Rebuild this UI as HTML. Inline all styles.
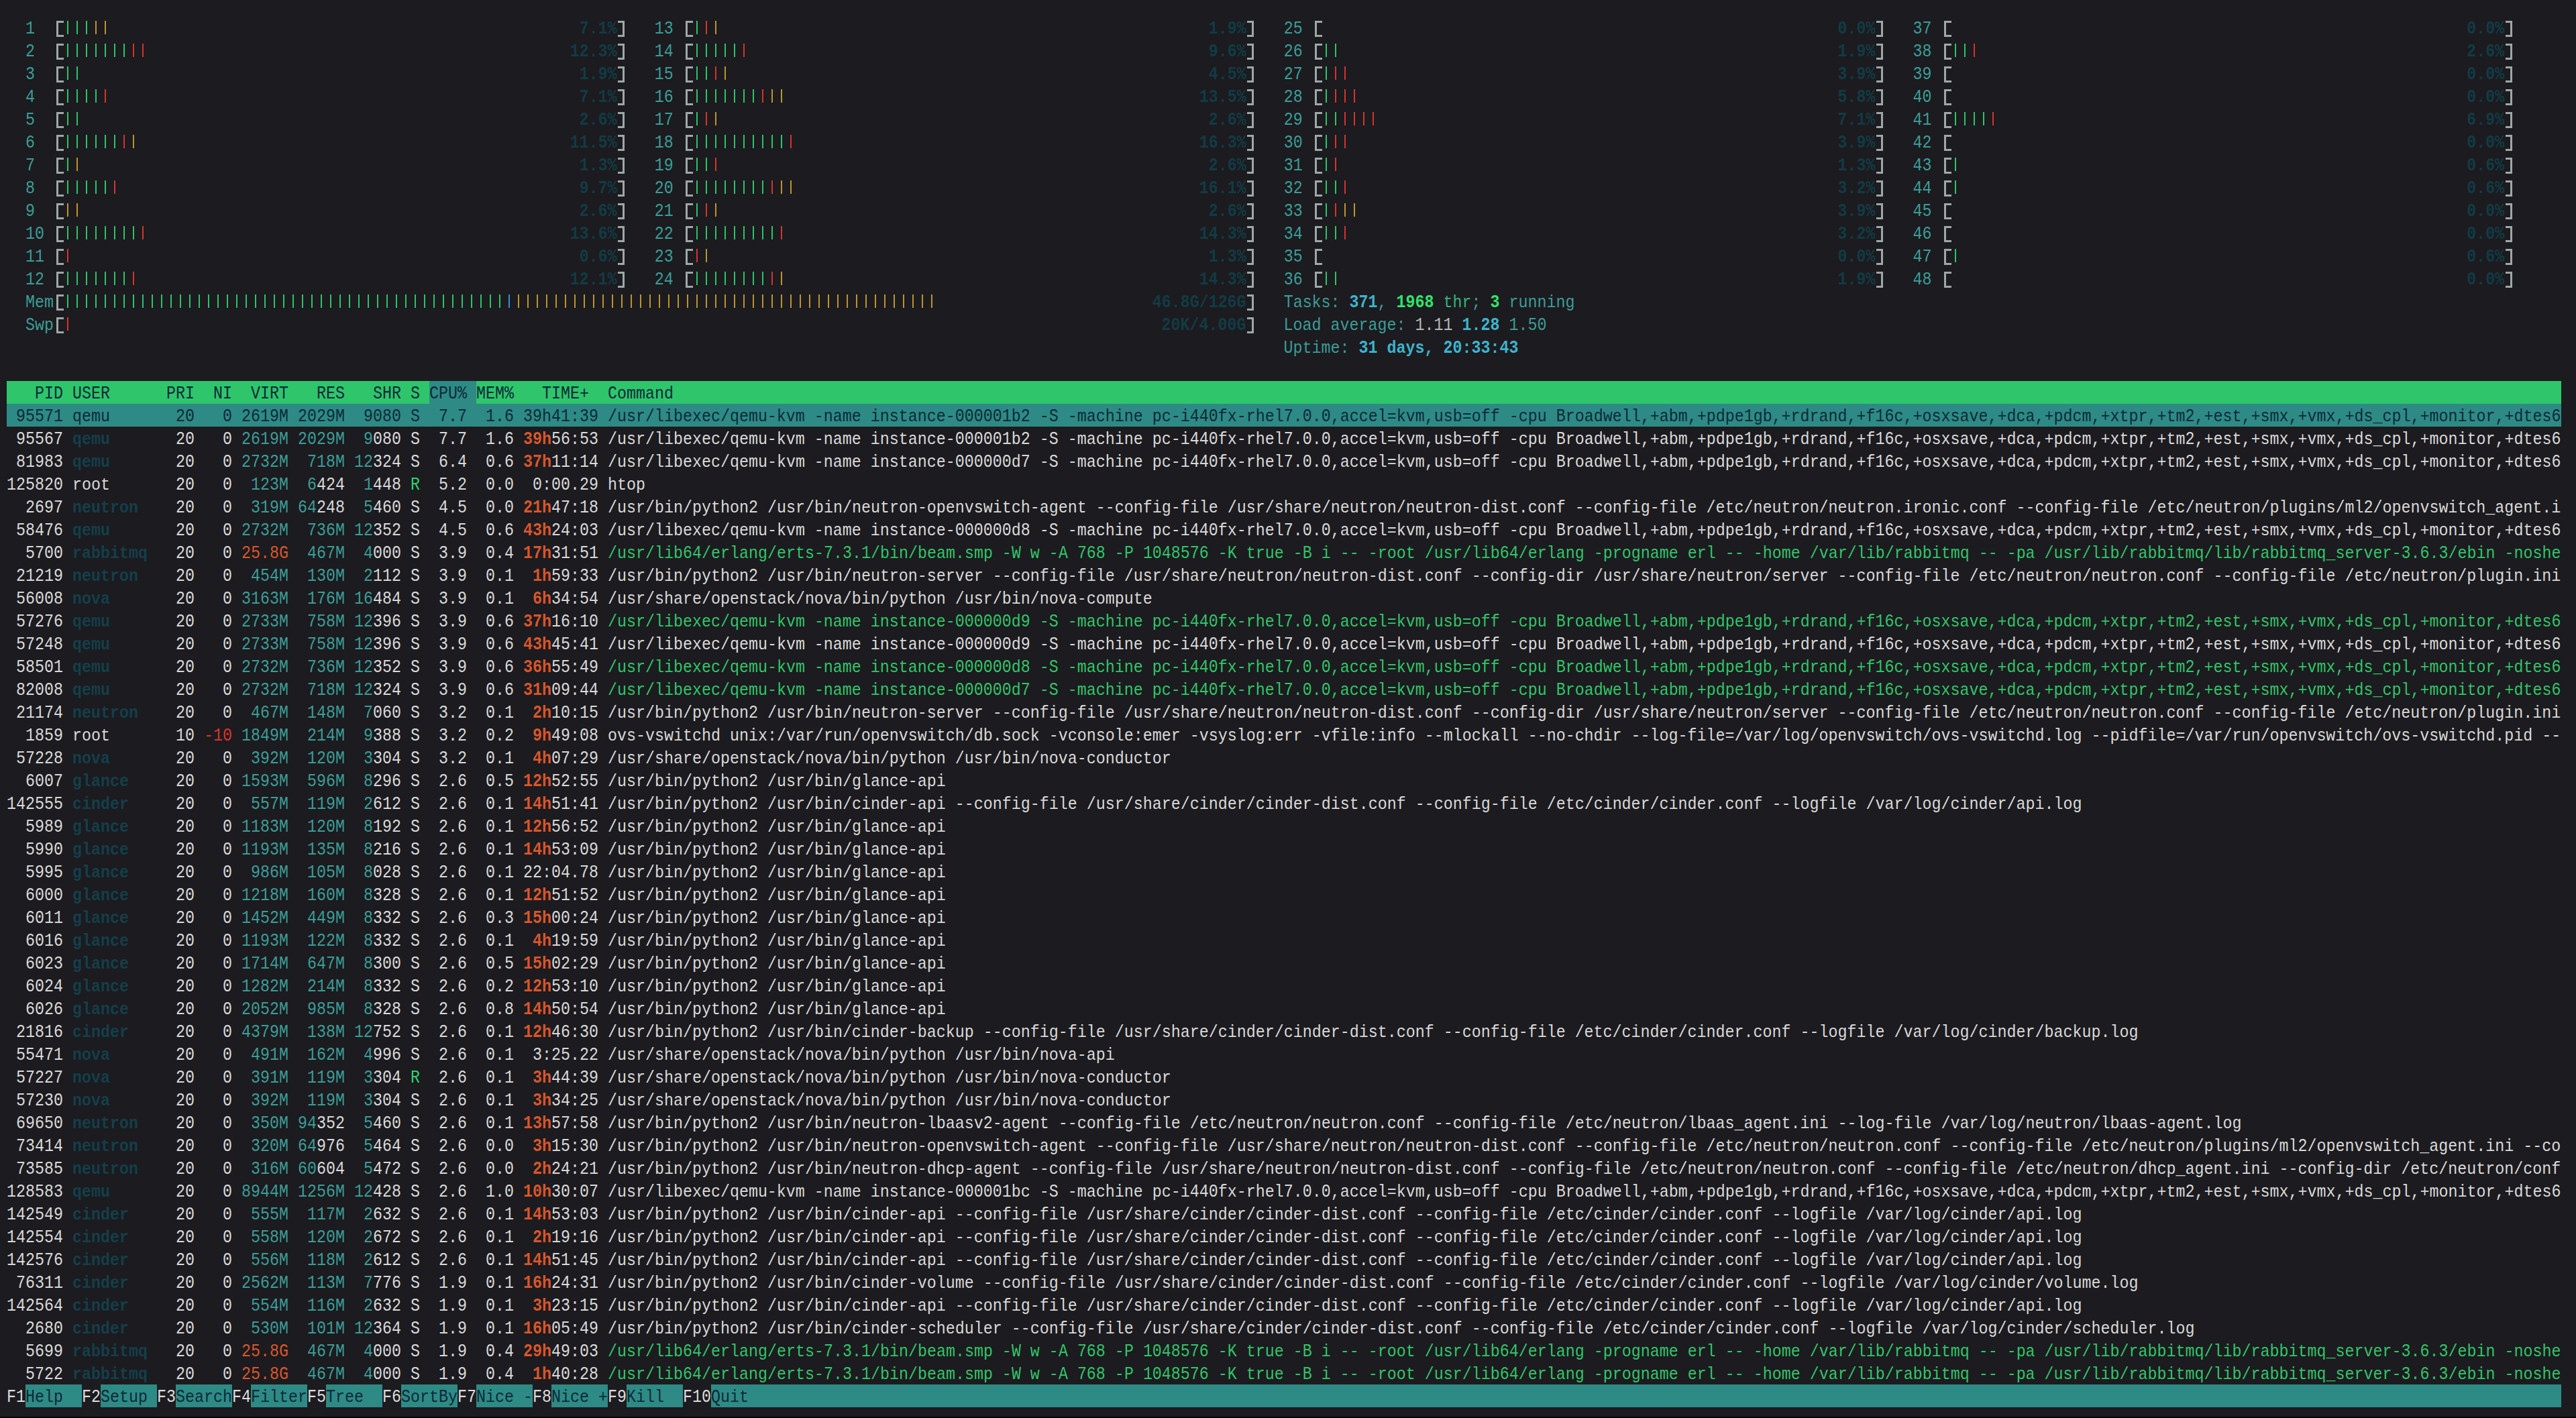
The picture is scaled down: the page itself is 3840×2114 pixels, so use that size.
<!DOCTYPE html><html><head><meta charset="utf-8"><style>
html,body{margin:0;padding:0;}body{width:3840px;height:2114px;background:#1c1b1f;position:relative;overflow:hidden;}
#bg div{position:absolute;height:34px;}
#bars i{position:absolute;width:2px;height:20px;}#brk i{position:absolute;background:#9da8a8;}
#t{position:absolute;left:10px;top:26px;transform-origin:0 0;transform:scaleX(0.875);font-family:"Liberation Mono",monospace;font-size:26.66px;line-height:34px;white-space:pre;}
#t div{height:34px;}
#t u{text-decoration:none;display:inline-block;transform:scaleY(1.06);transform-origin:0 24px;}
.w{color:#d9d9d9;}
.c{color:#3a9d97;}
.dim{color:#133f4a;font-weight:bold;}
.pct{color:#113b45;font-weight:bold;}
.br{color:#a3a9aa;}
.or{color:#d9562b;font-weight:bold;}
.orn{color:#d9562b;}
.tg{color:#31c469;}
.gr{color:#2fd16c;}
.lb{color:#3db4cd;font-weight:bold;}
.bg{color:#2fe36c;font-weight:bold;}
.gw{color:#b6baba;}
.tt{color:#33b47a;}
.hd{color:#0b2a3a;}
.sel{color:#0b2a3a;}
.red{color:#d8352e;}
.fk{color:#dcdcdc;}
</style></head><body>
<div id="bg">
<div style="left:10px;top:568px;width:630px;background:#2fc56b"></div>
<div style="left:640px;top:568px;width:70px;background:#2e8a84"></div>
<div style="left:710px;top:568px;width:3108px;background:#2fc56b"></div>
<div style="left:10px;top:602px;width:3808px;background:#2e8a84"></div>
<div style="left:38px;top:2064px;width:84px;background:#2e8a84"></div>
<div style="left:150px;top:2064px;width:84px;background:#2e8a84"></div>
<div style="left:262px;top:2064px;width:84px;background:#2e8a84"></div>
<div style="left:374px;top:2064px;width:84px;background:#2e8a84"></div>
<div style="left:486px;top:2064px;width:84px;background:#2e8a84"></div>
<div style="left:598px;top:2064px;width:84px;background:#2e8a84"></div>
<div style="left:710px;top:2064px;width:84px;background:#2e8a84"></div>
<div style="left:822px;top:2064px;width:84px;background:#2e8a84"></div>
<div style="left:934px;top:2064px;width:84px;background:#2e8a84"></div>
<div style="left:1060px;top:2064px;width:2758px;background:#2e8a84"></div>
</div><div id="bars">
<i style="left:100px;top:31px;background:#2ac466"></i>
<i style="left:114px;top:31px;background:#2ac466"></i>
<i style="left:128px;top:31px;background:#2ac466"></i>
<i style="left:142px;top:31px;background:#bb942c"></i>
<i style="left:156px;top:31px;background:#bb942c"></i>
<i style="left:100px;top:65px;background:#2ac466"></i>
<i style="left:114px;top:65px;background:#2ac466"></i>
<i style="left:128px;top:65px;background:#2ac466"></i>
<i style="left:142px;top:65px;background:#2ac466"></i>
<i style="left:156px;top:65px;background:#2ac466"></i>
<i style="left:170px;top:65px;background:#2ac466"></i>
<i style="left:184px;top:65px;background:#2ac466"></i>
<i style="left:198px;top:65px;background:#d3342d"></i>
<i style="left:212px;top:65px;background:#d3342d"></i>
<i style="left:100px;top:99px;background:#2ac466"></i>
<i style="left:114px;top:99px;background:#2ac466"></i>
<i style="left:100px;top:133px;background:#2ac466"></i>
<i style="left:114px;top:133px;background:#2ac466"></i>
<i style="left:128px;top:133px;background:#2ac466"></i>
<i style="left:142px;top:133px;background:#2ac466"></i>
<i style="left:156px;top:133px;background:#d3342d"></i>
<i style="left:100px;top:167px;background:#2ac466"></i>
<i style="left:114px;top:167px;background:#2ac466"></i>
<i style="left:100px;top:201px;background:#2ac466"></i>
<i style="left:114px;top:201px;background:#2ac466"></i>
<i style="left:128px;top:201px;background:#2ac466"></i>
<i style="left:142px;top:201px;background:#2ac466"></i>
<i style="left:156px;top:201px;background:#2ac466"></i>
<i style="left:170px;top:201px;background:#2ac466"></i>
<i style="left:184px;top:201px;background:#d3342d"></i>
<i style="left:198px;top:201px;background:#bb942c"></i>
<i style="left:100px;top:235px;background:#2ac466"></i>
<i style="left:114px;top:235px;background:#bb942c"></i>
<i style="left:100px;top:269px;background:#2ac466"></i>
<i style="left:114px;top:269px;background:#2ac466"></i>
<i style="left:128px;top:269px;background:#2ac466"></i>
<i style="left:142px;top:269px;background:#2ac466"></i>
<i style="left:156px;top:269px;background:#2ac466"></i>
<i style="left:170px;top:269px;background:#d3342d"></i>
<i style="left:100px;top:303px;background:#bb942c"></i>
<i style="left:114px;top:303px;background:#bb942c"></i>
<i style="left:100px;top:337px;background:#2ac466"></i>
<i style="left:114px;top:337px;background:#2ac466"></i>
<i style="left:128px;top:337px;background:#2ac466"></i>
<i style="left:142px;top:337px;background:#2ac466"></i>
<i style="left:156px;top:337px;background:#2ac466"></i>
<i style="left:170px;top:337px;background:#2ac466"></i>
<i style="left:184px;top:337px;background:#2ac466"></i>
<i style="left:198px;top:337px;background:#2ac466"></i>
<i style="left:212px;top:337px;background:#d3342d"></i>
<i style="left:100px;top:371px;background:#d3342d"></i>
<i style="left:100px;top:405px;background:#2ac466"></i>
<i style="left:114px;top:405px;background:#2ac466"></i>
<i style="left:128px;top:405px;background:#2ac466"></i>
<i style="left:142px;top:405px;background:#2ac466"></i>
<i style="left:156px;top:405px;background:#2ac466"></i>
<i style="left:170px;top:405px;background:#2ac466"></i>
<i style="left:184px;top:405px;background:#2ac466"></i>
<i style="left:198px;top:405px;background:#d3342d"></i>
<i style="left:1038px;top:31px;background:#2ac466"></i>
<i style="left:1052px;top:31px;background:#d3342d"></i>
<i style="left:1066px;top:31px;background:#bb942c"></i>
<i style="left:1038px;top:65px;background:#2ac466"></i>
<i style="left:1052px;top:65px;background:#2ac466"></i>
<i style="left:1066px;top:65px;background:#2ac466"></i>
<i style="left:1080px;top:65px;background:#2ac466"></i>
<i style="left:1094px;top:65px;background:#2ac466"></i>
<i style="left:1108px;top:65px;background:#d3342d"></i>
<i style="left:1038px;top:99px;background:#2ac466"></i>
<i style="left:1052px;top:99px;background:#2ac466"></i>
<i style="left:1066px;top:99px;background:#d3342d"></i>
<i style="left:1080px;top:99px;background:#bb942c"></i>
<i style="left:1038px;top:133px;background:#2ac466"></i>
<i style="left:1052px;top:133px;background:#2ac466"></i>
<i style="left:1066px;top:133px;background:#2ac466"></i>
<i style="left:1080px;top:133px;background:#2ac466"></i>
<i style="left:1094px;top:133px;background:#2ac466"></i>
<i style="left:1108px;top:133px;background:#2ac466"></i>
<i style="left:1122px;top:133px;background:#2ac466"></i>
<i style="left:1136px;top:133px;background:#d3342d"></i>
<i style="left:1150px;top:133px;background:#bb942c"></i>
<i style="left:1164px;top:133px;background:#bb942c"></i>
<i style="left:1038px;top:167px;background:#2ac466"></i>
<i style="left:1052px;top:167px;background:#d3342d"></i>
<i style="left:1066px;top:167px;background:#bb942c"></i>
<i style="left:1038px;top:201px;background:#2ac466"></i>
<i style="left:1052px;top:201px;background:#2ac466"></i>
<i style="left:1066px;top:201px;background:#2ac466"></i>
<i style="left:1080px;top:201px;background:#2ac466"></i>
<i style="left:1094px;top:201px;background:#2ac466"></i>
<i style="left:1108px;top:201px;background:#2ac466"></i>
<i style="left:1122px;top:201px;background:#2ac466"></i>
<i style="left:1136px;top:201px;background:#2ac466"></i>
<i style="left:1150px;top:201px;background:#2ac466"></i>
<i style="left:1164px;top:201px;background:#2ac466"></i>
<i style="left:1178px;top:201px;background:#d3342d"></i>
<i style="left:1038px;top:235px;background:#2ac466"></i>
<i style="left:1052px;top:235px;background:#2ac466"></i>
<i style="left:1066px;top:235px;background:#d3342d"></i>
<i style="left:1038px;top:269px;background:#2ac466"></i>
<i style="left:1052px;top:269px;background:#2ac466"></i>
<i style="left:1066px;top:269px;background:#2ac466"></i>
<i style="left:1080px;top:269px;background:#2ac466"></i>
<i style="left:1094px;top:269px;background:#2ac466"></i>
<i style="left:1108px;top:269px;background:#2ac466"></i>
<i style="left:1122px;top:269px;background:#2ac466"></i>
<i style="left:1136px;top:269px;background:#2ac466"></i>
<i style="left:1150px;top:269px;background:#d3342d"></i>
<i style="left:1164px;top:269px;background:#bb942c"></i>
<i style="left:1178px;top:269px;background:#bb942c"></i>
<i style="left:1038px;top:303px;background:#2ac466"></i>
<i style="left:1052px;top:303px;background:#d3342d"></i>
<i style="left:1066px;top:303px;background:#bb942c"></i>
<i style="left:1038px;top:337px;background:#2ac466"></i>
<i style="left:1052px;top:337px;background:#2ac466"></i>
<i style="left:1066px;top:337px;background:#2ac466"></i>
<i style="left:1080px;top:337px;background:#2ac466"></i>
<i style="left:1094px;top:337px;background:#2ac466"></i>
<i style="left:1108px;top:337px;background:#2ac466"></i>
<i style="left:1122px;top:337px;background:#2ac466"></i>
<i style="left:1136px;top:337px;background:#2ac466"></i>
<i style="left:1150px;top:337px;background:#2ac466"></i>
<i style="left:1164px;top:337px;background:#d3342d"></i>
<i style="left:1038px;top:371px;background:#d3342d"></i>
<i style="left:1052px;top:371px;background:#bb942c"></i>
<i style="left:1038px;top:405px;background:#2ac466"></i>
<i style="left:1052px;top:405px;background:#2ac466"></i>
<i style="left:1066px;top:405px;background:#2ac466"></i>
<i style="left:1080px;top:405px;background:#2ac466"></i>
<i style="left:1094px;top:405px;background:#2ac466"></i>
<i style="left:1108px;top:405px;background:#2ac466"></i>
<i style="left:1122px;top:405px;background:#2ac466"></i>
<i style="left:1136px;top:405px;background:#2ac466"></i>
<i style="left:1150px;top:405px;background:#d3342d"></i>
<i style="left:1164px;top:405px;background:#bb942c"></i>
<i style="left:1976px;top:65px;background:#2ac466"></i>
<i style="left:1990px;top:65px;background:#2ac466"></i>
<i style="left:1976px;top:99px;background:#2ac466"></i>
<i style="left:1990px;top:99px;background:#d3342d"></i>
<i style="left:2004px;top:99px;background:#d3342d"></i>
<i style="left:1976px;top:133px;background:#2ac466"></i>
<i style="left:1990px;top:133px;background:#d3342d"></i>
<i style="left:2004px;top:133px;background:#d3342d"></i>
<i style="left:2018px;top:133px;background:#d3342d"></i>
<i style="left:1976px;top:167px;background:#2ac466"></i>
<i style="left:1990px;top:167px;background:#2ac466"></i>
<i style="left:2004px;top:167px;background:#d3342d"></i>
<i style="left:2018px;top:167px;background:#d3342d"></i>
<i style="left:2032px;top:167px;background:#d3342d"></i>
<i style="left:2046px;top:167px;background:#d3342d"></i>
<i style="left:1976px;top:201px;background:#2ac466"></i>
<i style="left:1990px;top:201px;background:#d3342d"></i>
<i style="left:2004px;top:201px;background:#d3342d"></i>
<i style="left:1976px;top:235px;background:#2ac466"></i>
<i style="left:1990px;top:235px;background:#d3342d"></i>
<i style="left:1976px;top:269px;background:#2ac466"></i>
<i style="left:1990px;top:269px;background:#2ac466"></i>
<i style="left:2004px;top:269px;background:#d3342d"></i>
<i style="left:1976px;top:303px;background:#2ac466"></i>
<i style="left:1990px;top:303px;background:#d3342d"></i>
<i style="left:2004px;top:303px;background:#bb942c"></i>
<i style="left:2018px;top:303px;background:#bb942c"></i>
<i style="left:1976px;top:337px;background:#2ac466"></i>
<i style="left:1990px;top:337px;background:#2ac466"></i>
<i style="left:2004px;top:337px;background:#d3342d"></i>
<i style="left:1976px;top:405px;background:#2ac466"></i>
<i style="left:1990px;top:405px;background:#2ac466"></i>
<i style="left:2914px;top:65px;background:#2ac466"></i>
<i style="left:2928px;top:65px;background:#2ac466"></i>
<i style="left:2942px;top:65px;background:#d3342d"></i>
<i style="left:2914px;top:167px;background:#2ac466"></i>
<i style="left:2928px;top:167px;background:#2ac466"></i>
<i style="left:2942px;top:167px;background:#2ac466"></i>
<i style="left:2956px;top:167px;background:#2ac466"></i>
<i style="left:2970px;top:167px;background:#d3342d"></i>
<i style="left:2914px;top:235px;background:#2ac466"></i>
<i style="left:2914px;top:269px;background:#2ac466"></i>
<i style="left:2914px;top:371px;background:#2ac466"></i>
<i style="left:100px;top:439px;background:#2ac466"></i>
<i style="left:114px;top:439px;background:#2ac466"></i>
<i style="left:128px;top:439px;background:#2ac466"></i>
<i style="left:142px;top:439px;background:#2ac466"></i>
<i style="left:156px;top:439px;background:#2ac466"></i>
<i style="left:170px;top:439px;background:#2ac466"></i>
<i style="left:184px;top:439px;background:#2ac466"></i>
<i style="left:198px;top:439px;background:#2ac466"></i>
<i style="left:212px;top:439px;background:#2ac466"></i>
<i style="left:226px;top:439px;background:#2ac466"></i>
<i style="left:240px;top:439px;background:#2ac466"></i>
<i style="left:254px;top:439px;background:#2ac466"></i>
<i style="left:268px;top:439px;background:#2ac466"></i>
<i style="left:282px;top:439px;background:#2ac466"></i>
<i style="left:296px;top:439px;background:#2ac466"></i>
<i style="left:310px;top:439px;background:#2ac466"></i>
<i style="left:324px;top:439px;background:#2ac466"></i>
<i style="left:338px;top:439px;background:#2ac466"></i>
<i style="left:352px;top:439px;background:#2ac466"></i>
<i style="left:366px;top:439px;background:#2ac466"></i>
<i style="left:380px;top:439px;background:#2ac466"></i>
<i style="left:394px;top:439px;background:#2ac466"></i>
<i style="left:408px;top:439px;background:#2ac466"></i>
<i style="left:422px;top:439px;background:#2ac466"></i>
<i style="left:436px;top:439px;background:#2ac466"></i>
<i style="left:450px;top:439px;background:#2ac466"></i>
<i style="left:464px;top:439px;background:#2ac466"></i>
<i style="left:478px;top:439px;background:#2ac466"></i>
<i style="left:492px;top:439px;background:#2ac466"></i>
<i style="left:506px;top:439px;background:#2ac466"></i>
<i style="left:520px;top:439px;background:#2ac466"></i>
<i style="left:534px;top:439px;background:#2ac466"></i>
<i style="left:548px;top:439px;background:#2ac466"></i>
<i style="left:562px;top:439px;background:#2ac466"></i>
<i style="left:576px;top:439px;background:#2ac466"></i>
<i style="left:590px;top:439px;background:#2ac466"></i>
<i style="left:604px;top:439px;background:#2ac466"></i>
<i style="left:618px;top:439px;background:#2ac466"></i>
<i style="left:632px;top:439px;background:#2ac466"></i>
<i style="left:646px;top:439px;background:#2ac466"></i>
<i style="left:660px;top:439px;background:#2ac466"></i>
<i style="left:674px;top:439px;background:#2ac466"></i>
<i style="left:688px;top:439px;background:#2ac466"></i>
<i style="left:702px;top:439px;background:#2ac466"></i>
<i style="left:716px;top:439px;background:#2ac466"></i>
<i style="left:730px;top:439px;background:#2ac466"></i>
<i style="left:744px;top:439px;background:#2ac466"></i>
<i style="left:758px;top:439px;background:#3193d6"></i>
<i style="left:772px;top:439px;background:#bb942c"></i>
<i style="left:786px;top:439px;background:#bb942c"></i>
<i style="left:800px;top:439px;background:#bb942c"></i>
<i style="left:814px;top:439px;background:#bb942c"></i>
<i style="left:828px;top:439px;background:#bb942c"></i>
<i style="left:842px;top:439px;background:#bb942c"></i>
<i style="left:856px;top:439px;background:#bb942c"></i>
<i style="left:870px;top:439px;background:#bb942c"></i>
<i style="left:884px;top:439px;background:#bb942c"></i>
<i style="left:898px;top:439px;background:#bb942c"></i>
<i style="left:912px;top:439px;background:#bb942c"></i>
<i style="left:926px;top:439px;background:#bb942c"></i>
<i style="left:940px;top:439px;background:#bb942c"></i>
<i style="left:954px;top:439px;background:#bb942c"></i>
<i style="left:968px;top:439px;background:#bb942c"></i>
<i style="left:982px;top:439px;background:#bb942c"></i>
<i style="left:996px;top:439px;background:#bb942c"></i>
<i style="left:1010px;top:439px;background:#bb942c"></i>
<i style="left:1024px;top:439px;background:#bb942c"></i>
<i style="left:1038px;top:439px;background:#bb942c"></i>
<i style="left:1052px;top:439px;background:#bb942c"></i>
<i style="left:1066px;top:439px;background:#bb942c"></i>
<i style="left:1080px;top:439px;background:#bb942c"></i>
<i style="left:1094px;top:439px;background:#bb942c"></i>
<i style="left:1108px;top:439px;background:#bb942c"></i>
<i style="left:1122px;top:439px;background:#bb942c"></i>
<i style="left:1136px;top:439px;background:#bb942c"></i>
<i style="left:1150px;top:439px;background:#bb942c"></i>
<i style="left:1164px;top:439px;background:#bb942c"></i>
<i style="left:1178px;top:439px;background:#bb942c"></i>
<i style="left:1192px;top:439px;background:#bb942c"></i>
<i style="left:1206px;top:439px;background:#bb942c"></i>
<i style="left:1220px;top:439px;background:#bb942c"></i>
<i style="left:1234px;top:439px;background:#bb942c"></i>
<i style="left:1248px;top:439px;background:#bb942c"></i>
<i style="left:1262px;top:439px;background:#bb942c"></i>
<i style="left:1276px;top:439px;background:#bb942c"></i>
<i style="left:1290px;top:439px;background:#bb942c"></i>
<i style="left:1304px;top:439px;background:#bb942c"></i>
<i style="left:1318px;top:439px;background:#bb942c"></i>
<i style="left:1332px;top:439px;background:#bb942c"></i>
<i style="left:1346px;top:439px;background:#bb942c"></i>
<i style="left:1360px;top:439px;background:#bb942c"></i>
<i style="left:1374px;top:439px;background:#bb942c"></i>
<i style="left:1388px;top:439px;background:#bb942c"></i>
<i style="left:100px;top:473px;background:#d3342d"></i>
</div><div id="brk">
<i style="left:84px;top:31px;width:3px;height:24px"></i><i style="left:84px;top:31px;width:11px;height:3px"></i><i style="left:84px;top:52px;width:11px;height:3px"></i>
<i style="left:928px;top:31px;width:3px;height:24px"></i><i style="left:921px;top:31px;width:10px;height:3px"></i><i style="left:921px;top:52px;width:10px;height:3px"></i>
<i style="left:84px;top:65px;width:3px;height:24px"></i><i style="left:84px;top:65px;width:11px;height:3px"></i><i style="left:84px;top:86px;width:11px;height:3px"></i>
<i style="left:928px;top:65px;width:3px;height:24px"></i><i style="left:921px;top:65px;width:10px;height:3px"></i><i style="left:921px;top:86px;width:10px;height:3px"></i>
<i style="left:84px;top:99px;width:3px;height:24px"></i><i style="left:84px;top:99px;width:11px;height:3px"></i><i style="left:84px;top:120px;width:11px;height:3px"></i>
<i style="left:928px;top:99px;width:3px;height:24px"></i><i style="left:921px;top:99px;width:10px;height:3px"></i><i style="left:921px;top:120px;width:10px;height:3px"></i>
<i style="left:84px;top:133px;width:3px;height:24px"></i><i style="left:84px;top:133px;width:11px;height:3px"></i><i style="left:84px;top:154px;width:11px;height:3px"></i>
<i style="left:928px;top:133px;width:3px;height:24px"></i><i style="left:921px;top:133px;width:10px;height:3px"></i><i style="left:921px;top:154px;width:10px;height:3px"></i>
<i style="left:84px;top:167px;width:3px;height:24px"></i><i style="left:84px;top:167px;width:11px;height:3px"></i><i style="left:84px;top:188px;width:11px;height:3px"></i>
<i style="left:928px;top:167px;width:3px;height:24px"></i><i style="left:921px;top:167px;width:10px;height:3px"></i><i style="left:921px;top:188px;width:10px;height:3px"></i>
<i style="left:84px;top:201px;width:3px;height:24px"></i><i style="left:84px;top:201px;width:11px;height:3px"></i><i style="left:84px;top:222px;width:11px;height:3px"></i>
<i style="left:928px;top:201px;width:3px;height:24px"></i><i style="left:921px;top:201px;width:10px;height:3px"></i><i style="left:921px;top:222px;width:10px;height:3px"></i>
<i style="left:84px;top:235px;width:3px;height:24px"></i><i style="left:84px;top:235px;width:11px;height:3px"></i><i style="left:84px;top:256px;width:11px;height:3px"></i>
<i style="left:928px;top:235px;width:3px;height:24px"></i><i style="left:921px;top:235px;width:10px;height:3px"></i><i style="left:921px;top:256px;width:10px;height:3px"></i>
<i style="left:84px;top:269px;width:3px;height:24px"></i><i style="left:84px;top:269px;width:11px;height:3px"></i><i style="left:84px;top:290px;width:11px;height:3px"></i>
<i style="left:928px;top:269px;width:3px;height:24px"></i><i style="left:921px;top:269px;width:10px;height:3px"></i><i style="left:921px;top:290px;width:10px;height:3px"></i>
<i style="left:84px;top:303px;width:3px;height:24px"></i><i style="left:84px;top:303px;width:11px;height:3px"></i><i style="left:84px;top:324px;width:11px;height:3px"></i>
<i style="left:928px;top:303px;width:3px;height:24px"></i><i style="left:921px;top:303px;width:10px;height:3px"></i><i style="left:921px;top:324px;width:10px;height:3px"></i>
<i style="left:84px;top:337px;width:3px;height:24px"></i><i style="left:84px;top:337px;width:11px;height:3px"></i><i style="left:84px;top:358px;width:11px;height:3px"></i>
<i style="left:928px;top:337px;width:3px;height:24px"></i><i style="left:921px;top:337px;width:10px;height:3px"></i><i style="left:921px;top:358px;width:10px;height:3px"></i>
<i style="left:84px;top:371px;width:3px;height:24px"></i><i style="left:84px;top:371px;width:11px;height:3px"></i><i style="left:84px;top:392px;width:11px;height:3px"></i>
<i style="left:928px;top:371px;width:3px;height:24px"></i><i style="left:921px;top:371px;width:10px;height:3px"></i><i style="left:921px;top:392px;width:10px;height:3px"></i>
<i style="left:84px;top:405px;width:3px;height:24px"></i><i style="left:84px;top:405px;width:11px;height:3px"></i><i style="left:84px;top:426px;width:11px;height:3px"></i>
<i style="left:928px;top:405px;width:3px;height:24px"></i><i style="left:921px;top:405px;width:10px;height:3px"></i><i style="left:921px;top:426px;width:10px;height:3px"></i>
<i style="left:1022px;top:31px;width:3px;height:24px"></i><i style="left:1022px;top:31px;width:11px;height:3px"></i><i style="left:1022px;top:52px;width:11px;height:3px"></i>
<i style="left:1866px;top:31px;width:3px;height:24px"></i><i style="left:1859px;top:31px;width:10px;height:3px"></i><i style="left:1859px;top:52px;width:10px;height:3px"></i>
<i style="left:1022px;top:65px;width:3px;height:24px"></i><i style="left:1022px;top:65px;width:11px;height:3px"></i><i style="left:1022px;top:86px;width:11px;height:3px"></i>
<i style="left:1866px;top:65px;width:3px;height:24px"></i><i style="left:1859px;top:65px;width:10px;height:3px"></i><i style="left:1859px;top:86px;width:10px;height:3px"></i>
<i style="left:1022px;top:99px;width:3px;height:24px"></i><i style="left:1022px;top:99px;width:11px;height:3px"></i><i style="left:1022px;top:120px;width:11px;height:3px"></i>
<i style="left:1866px;top:99px;width:3px;height:24px"></i><i style="left:1859px;top:99px;width:10px;height:3px"></i><i style="left:1859px;top:120px;width:10px;height:3px"></i>
<i style="left:1022px;top:133px;width:3px;height:24px"></i><i style="left:1022px;top:133px;width:11px;height:3px"></i><i style="left:1022px;top:154px;width:11px;height:3px"></i>
<i style="left:1866px;top:133px;width:3px;height:24px"></i><i style="left:1859px;top:133px;width:10px;height:3px"></i><i style="left:1859px;top:154px;width:10px;height:3px"></i>
<i style="left:1022px;top:167px;width:3px;height:24px"></i><i style="left:1022px;top:167px;width:11px;height:3px"></i><i style="left:1022px;top:188px;width:11px;height:3px"></i>
<i style="left:1866px;top:167px;width:3px;height:24px"></i><i style="left:1859px;top:167px;width:10px;height:3px"></i><i style="left:1859px;top:188px;width:10px;height:3px"></i>
<i style="left:1022px;top:201px;width:3px;height:24px"></i><i style="left:1022px;top:201px;width:11px;height:3px"></i><i style="left:1022px;top:222px;width:11px;height:3px"></i>
<i style="left:1866px;top:201px;width:3px;height:24px"></i><i style="left:1859px;top:201px;width:10px;height:3px"></i><i style="left:1859px;top:222px;width:10px;height:3px"></i>
<i style="left:1022px;top:235px;width:3px;height:24px"></i><i style="left:1022px;top:235px;width:11px;height:3px"></i><i style="left:1022px;top:256px;width:11px;height:3px"></i>
<i style="left:1866px;top:235px;width:3px;height:24px"></i><i style="left:1859px;top:235px;width:10px;height:3px"></i><i style="left:1859px;top:256px;width:10px;height:3px"></i>
<i style="left:1022px;top:269px;width:3px;height:24px"></i><i style="left:1022px;top:269px;width:11px;height:3px"></i><i style="left:1022px;top:290px;width:11px;height:3px"></i>
<i style="left:1866px;top:269px;width:3px;height:24px"></i><i style="left:1859px;top:269px;width:10px;height:3px"></i><i style="left:1859px;top:290px;width:10px;height:3px"></i>
<i style="left:1022px;top:303px;width:3px;height:24px"></i><i style="left:1022px;top:303px;width:11px;height:3px"></i><i style="left:1022px;top:324px;width:11px;height:3px"></i>
<i style="left:1866px;top:303px;width:3px;height:24px"></i><i style="left:1859px;top:303px;width:10px;height:3px"></i><i style="left:1859px;top:324px;width:10px;height:3px"></i>
<i style="left:1022px;top:337px;width:3px;height:24px"></i><i style="left:1022px;top:337px;width:11px;height:3px"></i><i style="left:1022px;top:358px;width:11px;height:3px"></i>
<i style="left:1866px;top:337px;width:3px;height:24px"></i><i style="left:1859px;top:337px;width:10px;height:3px"></i><i style="left:1859px;top:358px;width:10px;height:3px"></i>
<i style="left:1022px;top:371px;width:3px;height:24px"></i><i style="left:1022px;top:371px;width:11px;height:3px"></i><i style="left:1022px;top:392px;width:11px;height:3px"></i>
<i style="left:1866px;top:371px;width:3px;height:24px"></i><i style="left:1859px;top:371px;width:10px;height:3px"></i><i style="left:1859px;top:392px;width:10px;height:3px"></i>
<i style="left:1022px;top:405px;width:3px;height:24px"></i><i style="left:1022px;top:405px;width:11px;height:3px"></i><i style="left:1022px;top:426px;width:11px;height:3px"></i>
<i style="left:1866px;top:405px;width:3px;height:24px"></i><i style="left:1859px;top:405px;width:10px;height:3px"></i><i style="left:1859px;top:426px;width:10px;height:3px"></i>
<i style="left:1960px;top:31px;width:3px;height:24px"></i><i style="left:1960px;top:31px;width:11px;height:3px"></i><i style="left:1960px;top:52px;width:11px;height:3px"></i>
<i style="left:2804px;top:31px;width:3px;height:24px"></i><i style="left:2797px;top:31px;width:10px;height:3px"></i><i style="left:2797px;top:52px;width:10px;height:3px"></i>
<i style="left:1960px;top:65px;width:3px;height:24px"></i><i style="left:1960px;top:65px;width:11px;height:3px"></i><i style="left:1960px;top:86px;width:11px;height:3px"></i>
<i style="left:2804px;top:65px;width:3px;height:24px"></i><i style="left:2797px;top:65px;width:10px;height:3px"></i><i style="left:2797px;top:86px;width:10px;height:3px"></i>
<i style="left:1960px;top:99px;width:3px;height:24px"></i><i style="left:1960px;top:99px;width:11px;height:3px"></i><i style="left:1960px;top:120px;width:11px;height:3px"></i>
<i style="left:2804px;top:99px;width:3px;height:24px"></i><i style="left:2797px;top:99px;width:10px;height:3px"></i><i style="left:2797px;top:120px;width:10px;height:3px"></i>
<i style="left:1960px;top:133px;width:3px;height:24px"></i><i style="left:1960px;top:133px;width:11px;height:3px"></i><i style="left:1960px;top:154px;width:11px;height:3px"></i>
<i style="left:2804px;top:133px;width:3px;height:24px"></i><i style="left:2797px;top:133px;width:10px;height:3px"></i><i style="left:2797px;top:154px;width:10px;height:3px"></i>
<i style="left:1960px;top:167px;width:3px;height:24px"></i><i style="left:1960px;top:167px;width:11px;height:3px"></i><i style="left:1960px;top:188px;width:11px;height:3px"></i>
<i style="left:2804px;top:167px;width:3px;height:24px"></i><i style="left:2797px;top:167px;width:10px;height:3px"></i><i style="left:2797px;top:188px;width:10px;height:3px"></i>
<i style="left:1960px;top:201px;width:3px;height:24px"></i><i style="left:1960px;top:201px;width:11px;height:3px"></i><i style="left:1960px;top:222px;width:11px;height:3px"></i>
<i style="left:2804px;top:201px;width:3px;height:24px"></i><i style="left:2797px;top:201px;width:10px;height:3px"></i><i style="left:2797px;top:222px;width:10px;height:3px"></i>
<i style="left:1960px;top:235px;width:3px;height:24px"></i><i style="left:1960px;top:235px;width:11px;height:3px"></i><i style="left:1960px;top:256px;width:11px;height:3px"></i>
<i style="left:2804px;top:235px;width:3px;height:24px"></i><i style="left:2797px;top:235px;width:10px;height:3px"></i><i style="left:2797px;top:256px;width:10px;height:3px"></i>
<i style="left:1960px;top:269px;width:3px;height:24px"></i><i style="left:1960px;top:269px;width:11px;height:3px"></i><i style="left:1960px;top:290px;width:11px;height:3px"></i>
<i style="left:2804px;top:269px;width:3px;height:24px"></i><i style="left:2797px;top:269px;width:10px;height:3px"></i><i style="left:2797px;top:290px;width:10px;height:3px"></i>
<i style="left:1960px;top:303px;width:3px;height:24px"></i><i style="left:1960px;top:303px;width:11px;height:3px"></i><i style="left:1960px;top:324px;width:11px;height:3px"></i>
<i style="left:2804px;top:303px;width:3px;height:24px"></i><i style="left:2797px;top:303px;width:10px;height:3px"></i><i style="left:2797px;top:324px;width:10px;height:3px"></i>
<i style="left:1960px;top:337px;width:3px;height:24px"></i><i style="left:1960px;top:337px;width:11px;height:3px"></i><i style="left:1960px;top:358px;width:11px;height:3px"></i>
<i style="left:2804px;top:337px;width:3px;height:24px"></i><i style="left:2797px;top:337px;width:10px;height:3px"></i><i style="left:2797px;top:358px;width:10px;height:3px"></i>
<i style="left:1960px;top:371px;width:3px;height:24px"></i><i style="left:1960px;top:371px;width:11px;height:3px"></i><i style="left:1960px;top:392px;width:11px;height:3px"></i>
<i style="left:2804px;top:371px;width:3px;height:24px"></i><i style="left:2797px;top:371px;width:10px;height:3px"></i><i style="left:2797px;top:392px;width:10px;height:3px"></i>
<i style="left:1960px;top:405px;width:3px;height:24px"></i><i style="left:1960px;top:405px;width:11px;height:3px"></i><i style="left:1960px;top:426px;width:11px;height:3px"></i>
<i style="left:2804px;top:405px;width:3px;height:24px"></i><i style="left:2797px;top:405px;width:10px;height:3px"></i><i style="left:2797px;top:426px;width:10px;height:3px"></i>
<i style="left:2898px;top:31px;width:3px;height:24px"></i><i style="left:2898px;top:31px;width:11px;height:3px"></i><i style="left:2898px;top:52px;width:11px;height:3px"></i>
<i style="left:3742px;top:31px;width:3px;height:24px"></i><i style="left:3735px;top:31px;width:10px;height:3px"></i><i style="left:3735px;top:52px;width:10px;height:3px"></i>
<i style="left:2898px;top:65px;width:3px;height:24px"></i><i style="left:2898px;top:65px;width:11px;height:3px"></i><i style="left:2898px;top:86px;width:11px;height:3px"></i>
<i style="left:3742px;top:65px;width:3px;height:24px"></i><i style="left:3735px;top:65px;width:10px;height:3px"></i><i style="left:3735px;top:86px;width:10px;height:3px"></i>
<i style="left:2898px;top:99px;width:3px;height:24px"></i><i style="left:2898px;top:99px;width:11px;height:3px"></i><i style="left:2898px;top:120px;width:11px;height:3px"></i>
<i style="left:3742px;top:99px;width:3px;height:24px"></i><i style="left:3735px;top:99px;width:10px;height:3px"></i><i style="left:3735px;top:120px;width:10px;height:3px"></i>
<i style="left:2898px;top:133px;width:3px;height:24px"></i><i style="left:2898px;top:133px;width:11px;height:3px"></i><i style="left:2898px;top:154px;width:11px;height:3px"></i>
<i style="left:3742px;top:133px;width:3px;height:24px"></i><i style="left:3735px;top:133px;width:10px;height:3px"></i><i style="left:3735px;top:154px;width:10px;height:3px"></i>
<i style="left:2898px;top:167px;width:3px;height:24px"></i><i style="left:2898px;top:167px;width:11px;height:3px"></i><i style="left:2898px;top:188px;width:11px;height:3px"></i>
<i style="left:3742px;top:167px;width:3px;height:24px"></i><i style="left:3735px;top:167px;width:10px;height:3px"></i><i style="left:3735px;top:188px;width:10px;height:3px"></i>
<i style="left:2898px;top:201px;width:3px;height:24px"></i><i style="left:2898px;top:201px;width:11px;height:3px"></i><i style="left:2898px;top:222px;width:11px;height:3px"></i>
<i style="left:3742px;top:201px;width:3px;height:24px"></i><i style="left:3735px;top:201px;width:10px;height:3px"></i><i style="left:3735px;top:222px;width:10px;height:3px"></i>
<i style="left:2898px;top:235px;width:3px;height:24px"></i><i style="left:2898px;top:235px;width:11px;height:3px"></i><i style="left:2898px;top:256px;width:11px;height:3px"></i>
<i style="left:3742px;top:235px;width:3px;height:24px"></i><i style="left:3735px;top:235px;width:10px;height:3px"></i><i style="left:3735px;top:256px;width:10px;height:3px"></i>
<i style="left:2898px;top:269px;width:3px;height:24px"></i><i style="left:2898px;top:269px;width:11px;height:3px"></i><i style="left:2898px;top:290px;width:11px;height:3px"></i>
<i style="left:3742px;top:269px;width:3px;height:24px"></i><i style="left:3735px;top:269px;width:10px;height:3px"></i><i style="left:3735px;top:290px;width:10px;height:3px"></i>
<i style="left:2898px;top:303px;width:3px;height:24px"></i><i style="left:2898px;top:303px;width:11px;height:3px"></i><i style="left:2898px;top:324px;width:11px;height:3px"></i>
<i style="left:3742px;top:303px;width:3px;height:24px"></i><i style="left:3735px;top:303px;width:10px;height:3px"></i><i style="left:3735px;top:324px;width:10px;height:3px"></i>
<i style="left:2898px;top:337px;width:3px;height:24px"></i><i style="left:2898px;top:337px;width:11px;height:3px"></i><i style="left:2898px;top:358px;width:11px;height:3px"></i>
<i style="left:3742px;top:337px;width:3px;height:24px"></i><i style="left:3735px;top:337px;width:10px;height:3px"></i><i style="left:3735px;top:358px;width:10px;height:3px"></i>
<i style="left:2898px;top:371px;width:3px;height:24px"></i><i style="left:2898px;top:371px;width:11px;height:3px"></i><i style="left:2898px;top:392px;width:11px;height:3px"></i>
<i style="left:3742px;top:371px;width:3px;height:24px"></i><i style="left:3735px;top:371px;width:10px;height:3px"></i><i style="left:3735px;top:392px;width:10px;height:3px"></i>
<i style="left:2898px;top:405px;width:3px;height:24px"></i><i style="left:2898px;top:405px;width:11px;height:3px"></i><i style="left:2898px;top:426px;width:11px;height:3px"></i>
<i style="left:3742px;top:405px;width:3px;height:24px"></i><i style="left:3735px;top:405px;width:10px;height:3px"></i><i style="left:3735px;top:426px;width:10px;height:3px"></i>
<i style="left:84px;top:439px;width:3px;height:24px"></i><i style="left:84px;top:439px;width:11px;height:3px"></i><i style="left:84px;top:460px;width:11px;height:3px"></i>
<i style="left:1866px;top:439px;width:3px;height:24px"></i><i style="left:1859px;top:439px;width:10px;height:3px"></i><i style="left:1859px;top:460px;width:10px;height:3px"></i>
<i style="left:84px;top:473px;width:3px;height:24px"></i><i style="left:84px;top:473px;width:11px;height:3px"></i><i style="left:84px;top:494px;width:11px;height:3px"></i>
<i style="left:1866px;top:473px;width:3px;height:24px"></i><i style="left:1859px;top:473px;width:10px;height:3px"></i><i style="left:1859px;top:494px;width:10px;height:3px"></i>
</div><div id="t"><div><span class="w">  </span><span class="c"><u>1</u>                                                          </span><span class="pct"><u>7</u>.<u>1%</u>    </span><span class="c"><u>13</u>                                                         </span><span class="pct"><u>1</u>.<u>9%</u>    </span><span class="c"><u>25</u>                                                         </span><span class="pct"><u>0</u>.<u>0%</u>    </span><span class="c"><u>37</u>                                                         </span><span class="pct"><u>0</u>.<u>0%</u></span></div><div><span class="w">  </span><span class="c"><u>2</u>                                                         </span><span class="pct"><u>12</u>.<u>3%</u>    </span><span class="c"><u>14</u>                                                         </span><span class="pct"><u>9</u>.<u>6%</u>    </span><span class="c"><u>26</u>                                                         </span><span class="pct"><u>1</u>.<u>9%</u>    </span><span class="c"><u>38</u>                                                         </span><span class="pct"><u>2</u>.<u>6%</u></span></div><div><span class="w">  </span><span class="c"><u>3</u>                                                          </span><span class="pct"><u>1</u>.<u>9%</u>    </span><span class="c"><u>15</u>                                                         </span><span class="pct"><u>4</u>.<u>5%</u>    </span><span class="c"><u>27</u>                                                         </span><span class="pct"><u>3</u>.<u>9%</u>    </span><span class="c"><u>39</u>                                                         </span><span class="pct"><u>0</u>.<u>0%</u></span></div><div><span class="w">  </span><span class="c"><u>4</u>                                                          </span><span class="pct"><u>7</u>.<u>1%</u>    </span><span class="c"><u>16</u>                                                        </span><span class="pct"><u>13</u>.<u>5%</u>    </span><span class="c"><u>28</u>                                                         </span><span class="pct"><u>5</u>.<u>8%</u>    </span><span class="c"><u>40</u>                                                         </span><span class="pct"><u>0</u>.<u>0%</u></span></div><div><span class="w">  </span><span class="c"><u>5</u>                                                          </span><span class="pct"><u>2</u>.<u>6%</u>    </span><span class="c"><u>17</u>                                                         </span><span class="pct"><u>2</u>.<u>6%</u>    </span><span class="c"><u>29</u>                                                         </span><span class="pct"><u>7</u>.<u>1%</u>    </span><span class="c"><u>41</u>                                                         </span><span class="pct"><u>6</u>.<u>9%</u></span></div><div><span class="w">  </span><span class="c"><u>6</u>                                                         </span><span class="pct"><u>11</u>.<u>5%</u>    </span><span class="c"><u>18</u>                                                        </span><span class="pct"><u>16</u>.<u>3%</u>    </span><span class="c"><u>30</u>                                                         </span><span class="pct"><u>3</u>.<u>9%</u>    </span><span class="c"><u>42</u>                                                         </span><span class="pct"><u>0</u>.<u>0%</u></span></div><div><span class="w">  </span><span class="c"><u>7</u>                                                          </span><span class="pct"><u>1</u>.<u>3%</u>    </span><span class="c"><u>19</u>                                                         </span><span class="pct"><u>2</u>.<u>6%</u>    </span><span class="c"><u>31</u>                                                         </span><span class="pct"><u>1</u>.<u>3%</u>    </span><span class="c"><u>43</u>                                                         </span><span class="pct"><u>0</u>.<u>6%</u></span></div><div><span class="w">  </span><span class="c"><u>8</u>                                                          </span><span class="pct"><u>9</u>.<u>7%</u>    </span><span class="c"><u>20</u>                                                        </span><span class="pct"><u>16</u>.<u>1%</u>    </span><span class="c"><u>32</u>                                                         </span><span class="pct"><u>3</u>.<u>2%</u>    </span><span class="c"><u>44</u>                                                         </span><span class="pct"><u>0</u>.<u>6%</u></span></div><div><span class="w">  </span><span class="c"><u>9</u>                                                          </span><span class="pct"><u>2</u>.<u>6%</u>    </span><span class="c"><u>21</u>                                                         </span><span class="pct"><u>2</u>.<u>6%</u>    </span><span class="c"><u>33</u>                                                         </span><span class="pct"><u>3</u>.<u>9%</u>    </span><span class="c"><u>45</u>                                                         </span><span class="pct"><u>0</u>.<u>0%</u></span></div><div><span class="w">  </span><span class="c"><u>10</u>                                                        </span><span class="pct"><u>13</u>.<u>6%</u>    </span><span class="c"><u>22</u>                                                        </span><span class="pct"><u>14</u>.<u>3%</u>    </span><span class="c"><u>34</u>                                                         </span><span class="pct"><u>3</u>.<u>2%</u>    </span><span class="c"><u>46</u>                                                         </span><span class="pct"><u>0</u>.<u>0%</u></span></div><div><span class="w">  </span><span class="c"><u>11</u>                                                         </span><span class="pct"><u>0</u>.<u>6%</u>    </span><span class="c"><u>23</u>                                                         </span><span class="pct"><u>1</u>.<u>3%</u>    </span><span class="c"><u>35</u>                                                         </span><span class="pct"><u>0</u>.<u>0%</u>    </span><span class="c"><u>47</u>                                                         </span><span class="pct"><u>0</u>.<u>6%</u></span></div><div><span class="w">  </span><span class="c"><u>12</u>                                                        </span><span class="pct"><u>12</u>.<u>1%</u>    </span><span class="c"><u>24</u>                                                        </span><span class="pct"><u>14</u>.<u>3%</u>    </span><span class="c"><u>36</u>                                                         </span><span class="pct"><u>1</u>.<u>9%</u>    </span><span class="c"><u>48</u>                                                         </span><span class="pct"><u>0</u>.<u>0%</u></span></div><div><span class="w">  </span><span class="c"><u>M</u>em                                                                                                                     </span><span class="pct"><u>46</u>.<u>8G</u>/<u>126G</u>    </span><span class="c"><u>T</u>asks: </span><span class="lb"><u>371</u></span><span class="c">, </span><span class="bg"><u>1968</u> </span><span class="tt">thr</span><span class="c">; </span><span class="bg"><u>3</u> </span><span class="c">running</span></div><div><span class="w">  </span><span class="c"><u>S</u>wp                                                                                                                      </span><span class="pct"><u>20K</u>/<u>4</u>.<u>00G</u>    </span><span class="c"><u>L</u>oad average: </span><span class="gw"><u>1</u>.<u>11</u> </span><span class="lb"><u>1</u>.<u>28</u> </span><span class="c"><u>1</u>.<u>50</u></span></div><div><span class="w">                                                                                                                                        </span><span class="c"><u>U</u>ptime: </span><span class="lb"><u>31</u> days, <u>20</u>:<u>33</u>:<u>43</u></span></div><div></div><div><span class="hd">   <u>PID</u> <u>USER</u>      <u>PRI</u>  <u>NI</u>  <u>VIRT</u>   <u>RES</u>   <u>SHR</u> <u>S</u> <u>CPU%</u> <u>MEM%</u>   <u>TIME</u>+  <u>C</u>ommand</span></div><div><span class="sel"> <u>95571</u> qemu       <u>20</u>   <u>0</u> <u>2619M</u> <u>2029M</u>  <u>9080</u> <u>S</u>  <u>7</u>.<u>7</u>  <u>1</u>.<u>6</u> <u>39</u>h<u>41</u>:<u>39</u> /usr/libexec/qemu-kvm -name instance-<u>000001</u>b<u>2</u> -<u>S</u> -machine pc-i<u>440</u>fx-rhel<u>7</u>.<u>0</u>.<u>0</u>,accel=kvm,usb=off -cpu <u>B</u>roadwell,+abm,+pdpe<u>1</u>gb,+rdrand,+f<u>16</u>c,+osxsave,+dca,+pdcm,+xtpr,+tm<u>2</u>,+est,+smx,+vmx,+ds_cpl,+monitor,+dtes<u>6</u></span></div><div><span class="w"> <u>95567</u> </span><span class="dim">qemu       </span><span class="w"><u>20</u>   <u>0</u> </span><span class="c"><u>2619M</u> <u>2029M</u>  <u>9</u></span><span class="w"><u>080</u> <u>S</u>  <u>7</u>.<u>7</u>  <u>1</u>.<u>6</u> </span><span class="or"><u>39</u>h</span><span class="w"><u>56</u>:<u>53</u> /usr/libexec/qemu-kvm -name instance-<u>000001</u>b<u>2</u> -<u>S</u> -machine pc-i<u>440</u>fx-rhel<u>7</u>.<u>0</u>.<u>0</u>,accel=kvm,usb=off -cpu <u>B</u>roadwell,+abm,+pdpe<u>1</u>gb,+rdrand,+f<u>16</u>c,+osxsave,+dca,+pdcm,+xtpr,+tm<u>2</u>,+est,+smx,+vmx,+ds_cpl,+monitor,+dtes<u>6</u></span></div><div><span class="w"> <u>81983</u> </span><span class="dim">qemu       </span><span class="w"><u>20</u>   <u>0</u> </span><span class="c"><u>2732M</u>  <u>718M</u> <u>12</u></span><span class="w"><u>324</u> <u>S</u>  <u>6</u>.<u>4</u>  <u>0</u>.<u>6</u> </span><span class="or"><u>37</u>h</span><span class="w"><u>11</u>:<u>14</u> /usr/libexec/qemu-kvm -name instance-<u>000000</u>d<u>7</u> -<u>S</u> -machine pc-i<u>440</u>fx-rhel<u>7</u>.<u>0</u>.<u>0</u>,accel=kvm,usb=off -cpu <u>B</u>roadwell,+abm,+pdpe<u>1</u>gb,+rdrand,+f<u>16</u>c,+osxsave,+dca,+pdcm,+xtpr,+tm<u>2</u>,+est,+smx,+vmx,+ds_cpl,+monitor,+dtes<u>6</u></span></div><div><span class="w"><u>125820</u> root       <u>20</u>   <u>0</u>  </span><span class="c"><u>123M</u>  <u>6</u></span><span class="w"><u>424</u>  </span><span class="c"><u>1</u></span><span class="w"><u>448</u> </span><span class="gr"><u>R</u>  </span><span class="w"><u>5</u>.<u>2</u>  <u>0</u>.<u>0</u>  <u>0</u>:<u>00</u>.<u>29</u> htop</span></div><div><span class="w">  <u>2697</u> </span><span class="dim">neutron    </span><span class="w"><u>20</u>   <u>0</u>  </span><span class="c"><u>319M</u> <u>64</u></span><span class="w"><u>248</u>  </span><span class="c"><u>5</u></span><span class="w"><u>460</u> <u>S</u>  <u>4</u>.<u>5</u>  <u>0</u>.<u>0</u> </span><span class="or"><u>21</u>h</span><span class="w"><u>47</u>:<u>18</u> /usr/bin/python<u>2</u> /usr/bin/neutron-openvswitch-agent --config-file /usr/share/neutron/neutron-dist.conf --config-file /etc/neutron/neutron.ironic.conf --config-file /etc/neutron/plugins/ml<u>2</u>/openvswitch_agent.i</span></div><div><span class="w"> <u>58476</u> </span><span class="dim">qemu       </span><span class="w"><u>20</u>   <u>0</u> </span><span class="c"><u>2732M</u>  <u>736M</u> <u>12</u></span><span class="w"><u>352</u> <u>S</u>  <u>4</u>.<u>5</u>  <u>0</u>.<u>6</u> </span><span class="or"><u>43</u>h</span><span class="w"><u>24</u>:<u>03</u> /usr/libexec/qemu-kvm -name instance-<u>000000</u>d<u>8</u> -<u>S</u> -machine pc-i<u>440</u>fx-rhel<u>7</u>.<u>0</u>.<u>0</u>,accel=kvm,usb=off -cpu <u>B</u>roadwell,+abm,+pdpe<u>1</u>gb,+rdrand,+f<u>16</u>c,+osxsave,+dca,+pdcm,+xtpr,+tm<u>2</u>,+est,+smx,+vmx,+ds_cpl,+monitor,+dtes<u>6</u></span></div><div><span class="w">  <u>5700</u> </span><span class="dim">rabbitmq   </span><span class="w"><u>20</u>   <u>0</u> </span><span class="orn"><u>25</u>.<u>8G</u>  </span><span class="c"><u>467M</u>  <u>4</u></span><span class="w"><u>000</u> <u>S</u>  <u>3</u>.<u>9</u>  <u>0</u>.<u>4</u> </span><span class="or"><u>17</u>h</span><span class="w"><u>31</u>:<u>51</u> </span><span class="tg">/usr/lib<u>64</u>/erlang/erts-<u>7</u>.<u>3</u>.<u>1</u>/bin/beam.smp -<u>W</u> w -<u>A</u> <u>768</u> -<u>P</u> <u>1048576</u> -<u>K</u> true -<u>B</u> i -- -root /usr/lib<u>64</u>/erlang -progname erl -- -home /var/lib/rabbitmq -- -pa /usr/lib/rabbitmq/lib/rabbitmq_server-<u>3</u>.<u>6</u>.<u>3</u>/ebin -noshe</span></div><div><span class="w"> <u>21219</u> </span><span class="dim">neutron    </span><span class="w"><u>20</u>   <u>0</u>  </span><span class="c"><u>454M</u>  <u>130M</u>  <u>2</u></span><span class="w"><u>112</u> <u>S</u>  <u>3</u>.<u>9</u>  <u>0</u>.<u>1</u>  </span><span class="or"><u>1</u>h</span><span class="w"><u>59</u>:<u>33</u> /usr/bin/python<u>2</u> /usr/bin/neutron-server --config-file /usr/share/neutron/neutron-dist.conf --config-dir /usr/share/neutron/server --config-file /etc/neutron/neutron.conf --config-file /etc/neutron/plugin.ini</span></div><div><span class="w"> <u>56008</u> </span><span class="dim">nova       </span><span class="w"><u>20</u>   <u>0</u> </span><span class="c"><u>3163M</u>  <u>176M</u> <u>16</u></span><span class="w"><u>484</u> <u>S</u>  <u>3</u>.<u>9</u>  <u>0</u>.<u>1</u>  </span><span class="or"><u>6</u>h</span><span class="w"><u>34</u>:<u>54</u> /usr/share/openstack/nova/bin/python /usr/bin/nova-compute</span></div><div><span class="w"> <u>57276</u> </span><span class="dim">qemu       </span><span class="w"><u>20</u>   <u>0</u> </span><span class="c"><u>2733M</u>  <u>758M</u> <u>12</u></span><span class="w"><u>396</u> <u>S</u>  <u>3</u>.<u>9</u>  <u>0</u>.<u>6</u> </span><span class="or"><u>37</u>h</span><span class="w"><u>16</u>:<u>10</u> </span><span class="tg">/usr/libexec/qemu-kvm -name instance-<u>000000</u>d<u>9</u> -<u>S</u> -machine pc-i<u>440</u>fx-rhel<u>7</u>.<u>0</u>.<u>0</u>,accel=kvm,usb=off -cpu <u>B</u>roadwell,+abm,+pdpe<u>1</u>gb,+rdrand,+f<u>16</u>c,+osxsave,+dca,+pdcm,+xtpr,+tm<u>2</u>,+est,+smx,+vmx,+ds_cpl,+monitor,+dtes<u>6</u></span></div><div><span class="w"> <u>57248</u> </span><span class="dim">qemu       </span><span class="w"><u>20</u>   <u>0</u> </span><span class="c"><u>2733M</u>  <u>758M</u> <u>12</u></span><span class="w"><u>396</u> <u>S</u>  <u>3</u>.<u>9</u>  <u>0</u>.<u>6</u> </span><span class="or"><u>43</u>h</span><span class="w"><u>45</u>:<u>41</u> /usr/libexec/qemu-kvm -name instance-<u>000000</u>d<u>9</u> -<u>S</u> -machine pc-i<u>440</u>fx-rhel<u>7</u>.<u>0</u>.<u>0</u>,accel=kvm,usb=off -cpu <u>B</u>roadwell,+abm,+pdpe<u>1</u>gb,+rdrand,+f<u>16</u>c,+osxsave,+dca,+pdcm,+xtpr,+tm<u>2</u>,+est,+smx,+vmx,+ds_cpl,+monitor,+dtes<u>6</u></span></div><div><span class="w"> <u>58501</u> </span><span class="dim">qemu       </span><span class="w"><u>20</u>   <u>0</u> </span><span class="c"><u>2732M</u>  <u>736M</u> <u>12</u></span><span class="w"><u>352</u> <u>S</u>  <u>3</u>.<u>9</u>  <u>0</u>.<u>6</u> </span><span class="or"><u>36</u>h</span><span class="w"><u>55</u>:<u>49</u> </span><span class="tg">/usr/libexec/qemu-kvm -name instance-<u>000000</u>d<u>8</u> -<u>S</u> -machine pc-i<u>440</u>fx-rhel<u>7</u>.<u>0</u>.<u>0</u>,accel=kvm,usb=off -cpu <u>B</u>roadwell,+abm,+pdpe<u>1</u>gb,+rdrand,+f<u>16</u>c,+osxsave,+dca,+pdcm,+xtpr,+tm<u>2</u>,+est,+smx,+vmx,+ds_cpl,+monitor,+dtes<u>6</u></span></div><div><span class="w"> <u>82008</u> </span><span class="dim">qemu       </span><span class="w"><u>20</u>   <u>0</u> </span><span class="c"><u>2732M</u>  <u>718M</u> <u>12</u></span><span class="w"><u>324</u> <u>S</u>  <u>3</u>.<u>9</u>  <u>0</u>.<u>6</u> </span><span class="or"><u>31</u>h</span><span class="w"><u>09</u>:<u>44</u> </span><span class="tg">/usr/libexec/qemu-kvm -name instance-<u>000000</u>d<u>7</u> -<u>S</u> -machine pc-i<u>440</u>fx-rhel<u>7</u>.<u>0</u>.<u>0</u>,accel=kvm,usb=off -cpu <u>B</u>roadwell,+abm,+pdpe<u>1</u>gb,+rdrand,+f<u>16</u>c,+osxsave,+dca,+pdcm,+xtpr,+tm<u>2</u>,+est,+smx,+vmx,+ds_cpl,+monitor,+dtes<u>6</u></span></div><div><span class="w"> <u>21174</u> </span><span class="dim">neutron    </span><span class="w"><u>20</u>   <u>0</u>  </span><span class="c"><u>467M</u>  <u>148M</u>  <u>7</u></span><span class="w"><u>060</u> <u>S</u>  <u>3</u>.<u>2</u>  <u>0</u>.<u>1</u>  </span><span class="or"><u>2</u>h</span><span class="w"><u>10</u>:<u>15</u> /usr/bin/python<u>2</u> /usr/bin/neutron-server --config-file /usr/share/neutron/neutron-dist.conf --config-dir /usr/share/neutron/server --config-file /etc/neutron/neutron.conf --config-file /etc/neutron/plugin.ini</span></div><div><span class="w">  <u>1859</u> root       <u>10</u> </span><span class="red">-<u>10</u> </span><span class="c"><u>1849M</u>  <u>214M</u>  <u>9</u></span><span class="w"><u>388</u> <u>S</u>  <u>3</u>.<u>2</u>  <u>0</u>.<u>2</u>  </span><span class="or"><u>9</u>h</span><span class="w"><u>49</u>:<u>08</u> ovs-vswitchd unix:/var/run/openvswitch/db.sock -vconsole:emer -vsyslog:err -vfile:info --mlockall --no-chdir --log-file=/var/log/openvswitch/ovs-vswitchd.log --pidfile=/var/run/openvswitch/ovs-vswitchd.pid --</span></div><div><span class="w"> <u>57228</u> </span><span class="dim">nova       </span><span class="w"><u>20</u>   <u>0</u>  </span><span class="c"><u>392M</u>  <u>120M</u>  <u>3</u></span><span class="w"><u>304</u> <u>S</u>  <u>3</u>.<u>2</u>  <u>0</u>.<u>1</u>  </span><span class="or"><u>4</u>h</span><span class="w"><u>07</u>:<u>29</u> /usr/share/openstack/nova/bin/python /usr/bin/nova-conductor</span></div><div><span class="w">  <u>6007</u> </span><span class="dim">glance     </span><span class="w"><u>20</u>   <u>0</u> </span><span class="c"><u>1593M</u>  <u>596M</u>  <u>8</u></span><span class="w"><u>296</u> <u>S</u>  <u>2</u>.<u>6</u>  <u>0</u>.<u>5</u> </span><span class="or"><u>12</u>h</span><span class="w"><u>52</u>:<u>55</u> /usr/bin/python<u>2</u> /usr/bin/glance-api</span></div><div><span class="w"><u>142555</u> </span><span class="dim">cinder     </span><span class="w"><u>20</u>   <u>0</u>  </span><span class="c"><u>557M</u>  <u>119M</u>  <u>2</u></span><span class="w"><u>612</u> <u>S</u>  <u>2</u>.<u>6</u>  <u>0</u>.<u>1</u> </span><span class="or"><u>14</u>h</span><span class="w"><u>51</u>:<u>41</u> /usr/bin/python<u>2</u> /usr/bin/cinder-api --config-file /usr/share/cinder/cinder-dist.conf --config-file /etc/cinder/cinder.conf --logfile /var/log/cinder/api.log</span></div><div><span class="w">  <u>5989</u> </span><span class="dim">glance     </span><span class="w"><u>20</u>   <u>0</u> </span><span class="c"><u>1183M</u>  <u>120M</u>  <u>8</u></span><span class="w"><u>192</u> <u>S</u>  <u>2</u>.<u>6</u>  <u>0</u>.<u>1</u> </span><span class="or"><u>12</u>h</span><span class="w"><u>56</u>:<u>52</u> /usr/bin/python<u>2</u> /usr/bin/glance-api</span></div><div><span class="w">  <u>5990</u> </span><span class="dim">glance     </span><span class="w"><u>20</u>   <u>0</u> </span><span class="c"><u>1193M</u>  <u>135M</u>  <u>8</u></span><span class="w"><u>216</u> <u>S</u>  <u>2</u>.<u>6</u>  <u>0</u>.<u>1</u> </span><span class="or"><u>14</u>h</span><span class="w"><u>53</u>:<u>09</u> /usr/bin/python<u>2</u> /usr/bin/glance-api</span></div><div><span class="w">  <u>5995</u> </span><span class="dim">glance     </span><span class="w"><u>20</u>   <u>0</u>  </span><span class="c"><u>986M</u>  <u>105M</u>  <u>8</u></span><span class="w"><u>028</u> <u>S</u>  <u>2</u>.<u>6</u>  <u>0</u>.<u>1</u> <u>22</u>:<u>04</u>.<u>78</u> /usr/bin/python<u>2</u> /usr/bin/glance-api</span></div><div><span class="w">  <u>6000</u> </span><span class="dim">glance     </span><span class="w"><u>20</u>   <u>0</u> </span><span class="c"><u>1218M</u>  <u>160M</u>  <u>8</u></span><span class="w"><u>328</u> <u>S</u>  <u>2</u>.<u>6</u>  <u>0</u>.<u>1</u> </span><span class="or"><u>12</u>h</span><span class="w"><u>51</u>:<u>52</u> /usr/bin/python<u>2</u> /usr/bin/glance-api</span></div><div><span class="w">  <u>6011</u> </span><span class="dim">glance     </span><span class="w"><u>20</u>   <u>0</u> </span><span class="c"><u>1452M</u>  <u>449M</u>  <u>8</u></span><span class="w"><u>332</u> <u>S</u>  <u>2</u>.<u>6</u>  <u>0</u>.<u>3</u> </span><span class="or"><u>15</u>h</span><span class="w"><u>00</u>:<u>24</u> /usr/bin/python<u>2</u> /usr/bin/glance-api</span></div><div><span class="w">  <u>6016</u> </span><span class="dim">glance     </span><span class="w"><u>20</u>   <u>0</u> </span><span class="c"><u>1193M</u>  <u>122M</u>  <u>8</u></span><span class="w"><u>332</u> <u>S</u>  <u>2</u>.<u>6</u>  <u>0</u>.<u>1</u>  </span><span class="or"><u>4</u>h</span><span class="w"><u>19</u>:<u>59</u> /usr/bin/python<u>2</u> /usr/bin/glance-api</span></div><div><span class="w">  <u>6023</u> </span><span class="dim">glance     </span><span class="w"><u>20</u>   <u>0</u> </span><span class="c"><u>1714M</u>  <u>647M</u>  <u>8</u></span><span class="w"><u>300</u> <u>S</u>  <u>2</u>.<u>6</u>  <u>0</u>.<u>5</u> </span><span class="or"><u>15</u>h</span><span class="w"><u>02</u>:<u>29</u> /usr/bin/python<u>2</u> /usr/bin/glance-api</span></div><div><span class="w">  <u>6024</u> </span><span class="dim">glance     </span><span class="w"><u>20</u>   <u>0</u> </span><span class="c"><u>1282M</u>  <u>214M</u>  <u>8</u></span><span class="w"><u>332</u> <u>S</u>  <u>2</u>.<u>6</u>  <u>0</u>.<u>2</u> </span><span class="or"><u>12</u>h</span><span class="w"><u>53</u>:<u>10</u> /usr/bin/python<u>2</u> /usr/bin/glance-api</span></div><div><span class="w">  <u>6026</u> </span><span class="dim">glance     </span><span class="w"><u>20</u>   <u>0</u> </span><span class="c"><u>2052M</u>  <u>985M</u>  <u>8</u></span><span class="w"><u>328</u> <u>S</u>  <u>2</u>.<u>6</u>  <u>0</u>.<u>8</u> </span><span class="or"><u>14</u>h</span><span class="w"><u>50</u>:<u>54</u> /usr/bin/python<u>2</u> /usr/bin/glance-api</span></div><div><span class="w"> <u>21816</u> </span><span class="dim">cinder     </span><span class="w"><u>20</u>   <u>0</u> </span><span class="c"><u>4379M</u>  <u>138M</u> <u>12</u></span><span class="w"><u>752</u> <u>S</u>  <u>2</u>.<u>6</u>  <u>0</u>.<u>1</u> </span><span class="or"><u>12</u>h</span><span class="w"><u>46</u>:<u>30</u> /usr/bin/python<u>2</u> /usr/bin/cinder-backup --config-file /usr/share/cinder/cinder-dist.conf --config-file /etc/cinder/cinder.conf --logfile /var/log/cinder/backup.log</span></div><div><span class="w"> <u>55471</u> </span><span class="dim">nova       </span><span class="w"><u>20</u>   <u>0</u>  </span><span class="c"><u>491M</u>  <u>162M</u>  <u>4</u></span><span class="w"><u>996</u> <u>S</u>  <u>2</u>.<u>6</u>  <u>0</u>.<u>1</u>  <u>3</u>:<u>25</u>.<u>22</u> /usr/share/openstack/nova/bin/python /usr/bin/nova-api</span></div><div><span class="w"> <u>57227</u> </span><span class="dim">nova       </span><span class="w"><u>20</u>   <u>0</u>  </span><span class="c"><u>391M</u>  <u>119M</u>  <u>3</u></span><span class="w"><u>304</u> </span><span class="gr"><u>R</u>  </span><span class="w"><u>2</u>.<u>6</u>  <u>0</u>.<u>1</u>  </span><span class="or"><u>3</u>h</span><span class="w"><u>44</u>:<u>39</u> /usr/share/openstack/nova/bin/python /usr/bin/nova-conductor</span></div><div><span class="w"> <u>57230</u> </span><span class="dim">nova       </span><span class="w"><u>20</u>   <u>0</u>  </span><span class="c"><u>392M</u>  <u>119M</u>  <u>3</u></span><span class="w"><u>304</u> <u>S</u>  <u>2</u>.<u>6</u>  <u>0</u>.<u>1</u>  </span><span class="or"><u>3</u>h</span><span class="w"><u>34</u>:<u>25</u> /usr/share/openstack/nova/bin/python /usr/bin/nova-conductor</span></div><div><span class="w"> <u>69650</u> </span><span class="dim">neutron    </span><span class="w"><u>20</u>   <u>0</u>  </span><span class="c"><u>350M</u> <u>94</u></span><span class="w"><u>352</u>  </span><span class="c"><u>5</u></span><span class="w"><u>460</u> <u>S</u>  <u>2</u>.<u>6</u>  <u>0</u>.<u>1</u> </span><span class="or"><u>13</u>h</span><span class="w"><u>57</u>:<u>58</u> /usr/bin/python<u>2</u> /usr/bin/neutron-lbaasv<u>2</u>-agent --config-file /etc/neutron/neutron.conf --config-file /etc/neutron/lbaas_agent.ini --log-file /var/log/neutron/lbaas-agent.log</span></div><div><span class="w"> <u>73414</u> </span><span class="dim">neutron    </span><span class="w"><u>20</u>   <u>0</u>  </span><span class="c"><u>320M</u> <u>64</u></span><span class="w"><u>976</u>  </span><span class="c"><u>5</u></span><span class="w"><u>464</u> <u>S</u>  <u>2</u>.<u>6</u>  <u>0</u>.<u>0</u>  </span><span class="or"><u>3</u>h</span><span class="w"><u>15</u>:<u>30</u> /usr/bin/python<u>2</u> /usr/bin/neutron-openvswitch-agent --config-file /usr/share/neutron/neutron-dist.conf --config-file /etc/neutron/neutron.conf --config-file /etc/neutron/plugins/ml<u>2</u>/openvswitch_agent.ini --co</span></div><div><span class="w"> <u>73585</u> </span><span class="dim">neutron    </span><span class="w"><u>20</u>   <u>0</u>  </span><span class="c"><u>316M</u> <u>60</u></span><span class="w"><u>604</u>  </span><span class="c"><u>5</u></span><span class="w"><u>472</u> <u>S</u>  <u>2</u>.<u>6</u>  <u>0</u>.<u>0</u>  </span><span class="or"><u>2</u>h</span><span class="w"><u>24</u>:<u>21</u> /usr/bin/python<u>2</u> /usr/bin/neutron-dhcp-agent --config-file /usr/share/neutron/neutron-dist.conf --config-file /etc/neutron/neutron.conf --config-file /etc/neutron/dhcp_agent.ini --config-dir /etc/neutron/conf</span></div><div><span class="w"><u>128583</u> </span><span class="dim">qemu       </span><span class="w"><u>20</u>   <u>0</u> </span><span class="c"><u>8944M</u> <u>1256M</u> <u>12</u></span><span class="w"><u>428</u> <u>S</u>  <u>2</u>.<u>6</u>  <u>1</u>.<u>0</u> </span><span class="or"><u>10</u>h</span><span class="w"><u>30</u>:<u>07</u> /usr/libexec/qemu-kvm -name instance-<u>000001</u>bc -<u>S</u> -machine pc-i<u>440</u>fx-rhel<u>7</u>.<u>0</u>.<u>0</u>,accel=kvm,usb=off -cpu <u>B</u>roadwell,+abm,+pdpe<u>1</u>gb,+rdrand,+f<u>16</u>c,+osxsave,+dca,+pdcm,+xtpr,+tm<u>2</u>,+est,+smx,+vmx,+ds_cpl,+monitor,+dtes<u>6</u></span></div><div><span class="w"><u>142549</u> </span><span class="dim">cinder     </span><span class="w"><u>20</u>   <u>0</u>  </span><span class="c"><u>555M</u>  <u>117M</u>  <u>2</u></span><span class="w"><u>632</u> <u>S</u>  <u>2</u>.<u>6</u>  <u>0</u>.<u>1</u> </span><span class="or"><u>14</u>h</span><span class="w"><u>53</u>:<u>03</u> /usr/bin/python<u>2</u> /usr/bin/cinder-api --config-file /usr/share/cinder/cinder-dist.conf --config-file /etc/cinder/cinder.conf --logfile /var/log/cinder/api.log</span></div><div><span class="w"><u>142554</u> </span><span class="dim">cinder     </span><span class="w"><u>20</u>   <u>0</u>  </span><span class="c"><u>558M</u>  <u>120M</u>  <u>2</u></span><span class="w"><u>672</u> <u>S</u>  <u>2</u>.<u>6</u>  <u>0</u>.<u>1</u>  </span><span class="or"><u>2</u>h</span><span class="w"><u>19</u>:<u>16</u> /usr/bin/python<u>2</u> /usr/bin/cinder-api --config-file /usr/share/cinder/cinder-dist.conf --config-file /etc/cinder/cinder.conf --logfile /var/log/cinder/api.log</span></div><div><span class="w"><u>142576</u> </span><span class="dim">cinder     </span><span class="w"><u>20</u>   <u>0</u>  </span><span class="c"><u>556M</u>  <u>118M</u>  <u>2</u></span><span class="w"><u>612</u> <u>S</u>  <u>2</u>.<u>6</u>  <u>0</u>.<u>1</u> </span><span class="or"><u>14</u>h</span><span class="w"><u>51</u>:<u>45</u> /usr/bin/python<u>2</u> /usr/bin/cinder-api --config-file /usr/share/cinder/cinder-dist.conf --config-file /etc/cinder/cinder.conf --logfile /var/log/cinder/api.log</span></div><div><span class="w"> <u>76311</u> </span><span class="dim">cinder     </span><span class="w"><u>20</u>   <u>0</u> </span><span class="c"><u>2562M</u>  <u>113M</u>  <u>7</u></span><span class="w"><u>776</u> <u>S</u>  <u>1</u>.<u>9</u>  <u>0</u>.<u>1</u> </span><span class="or"><u>16</u>h</span><span class="w"><u>24</u>:<u>31</u> /usr/bin/python<u>2</u> /usr/bin/cinder-volume --config-file /usr/share/cinder/cinder-dist.conf --config-file /etc/cinder/cinder.conf --logfile /var/log/cinder/volume.log</span></div><div><span class="w"><u>142564</u> </span><span class="dim">cinder     </span><span class="w"><u>20</u>   <u>0</u>  </span><span class="c"><u>554M</u>  <u>116M</u>  <u>2</u></span><span class="w"><u>632</u> <u>S</u>  <u>1</u>.<u>9</u>  <u>0</u>.<u>1</u>  </span><span class="or"><u>3</u>h</span><span class="w"><u>23</u>:<u>15</u> /usr/bin/python<u>2</u> /usr/bin/cinder-api --config-file /usr/share/cinder/cinder-dist.conf --config-file /etc/cinder/cinder.conf --logfile /var/log/cinder/api.log</span></div><div><span class="w">  <u>2680</u> </span><span class="dim">cinder     </span><span class="w"><u>20</u>   <u>0</u>  </span><span class="c"><u>530M</u>  <u>101M</u> <u>12</u></span><span class="w"><u>364</u> <u>S</u>  <u>1</u>.<u>9</u>  <u>0</u>.<u>1</u> </span><span class="or"><u>16</u>h</span><span class="w"><u>05</u>:<u>49</u> /usr/bin/python<u>2</u> /usr/bin/cinder-scheduler --config-file /usr/share/cinder/cinder-dist.conf --config-file /etc/cinder/cinder.conf --logfile /var/log/cinder/scheduler.log</span></div><div><span class="w">  <u>5699</u> </span><span class="dim">rabbitmq   </span><span class="w"><u>20</u>   <u>0</u> </span><span class="orn"><u>25</u>.<u>8G</u>  </span><span class="c"><u>467M</u>  <u>4</u></span><span class="w"><u>000</u> <u>S</u>  <u>1</u>.<u>9</u>  <u>0</u>.<u>4</u> </span><span class="or"><u>29</u>h</span><span class="w"><u>49</u>:<u>03</u> </span><span class="tg">/usr/lib<u>64</u>/erlang/erts-<u>7</u>.<u>3</u>.<u>1</u>/bin/beam.smp -<u>W</u> w -<u>A</u> <u>768</u> -<u>P</u> <u>1048576</u> -<u>K</u> true -<u>B</u> i -- -root /usr/lib<u>64</u>/erlang -progname erl -- -home /var/lib/rabbitmq -- -pa /usr/lib/rabbitmq/lib/rabbitmq_server-<u>3</u>.<u>6</u>.<u>3</u>/ebin -noshe</span></div><div><span class="w">  <u>5722</u> </span><span class="dim">rabbitmq   </span><span class="w"><u>20</u>   <u>0</u> </span><span class="orn"><u>25</u>.<u>8G</u>  </span><span class="c"><u>467M</u>  <u>4</u></span><span class="w"><u>000</u> <u>S</u>  <u>1</u>.<u>9</u>  <u>0</u>.<u>4</u>  </span><span class="or"><u>1</u>h</span><span class="w"><u>40</u>:<u>28</u> </span><span class="tg">/usr/lib<u>64</u>/erlang/erts-<u>7</u>.<u>3</u>.<u>1</u>/bin/beam.smp -<u>W</u> w -<u>A</u> <u>768</u> -<u>P</u> <u>1048576</u> -<u>K</u> true -<u>B</u> i -- -root /usr/lib<u>64</u>/erlang -progname erl -- -home /var/lib/rabbitmq -- -pa /usr/lib/rabbitmq/lib/rabbitmq_server-<u>3</u>.<u>6</u>.<u>3</u>/ebin -noshe</span></div><div><span class="fk"><u>F1</u></span><span class="sel"><u>H</u>elp  </span><span class="fk"><u>F2</u></span><span class="sel"><u>S</u>etup </span><span class="fk"><u>F3</u></span><span class="sel"><u>S</u>earch</span><span class="fk"><u>F4</u></span><span class="sel"><u>F</u>ilter</span><span class="fk"><u>F5</u></span><span class="sel"><u>T</u>ree  </span><span class="fk"><u>F6</u></span><span class="sel"><u>S</u>ort<u>B</u>y</span><span class="fk"><u>F7</u></span><span class="sel"><u>N</u>ice -</span><span class="fk"><u>F8</u></span><span class="sel"><u>N</u>ice +</span><span class="fk"><u>F9</u></span><span class="sel"><u>K</u>ill  </span><span class="fk"><u>F10</u></span><span class="sel"><u>Q</u>uit</span></div></div>
<div style="position:absolute;left:0;top:2112px;width:3840px;height:2px;background:#000"></div>
</body></html>
